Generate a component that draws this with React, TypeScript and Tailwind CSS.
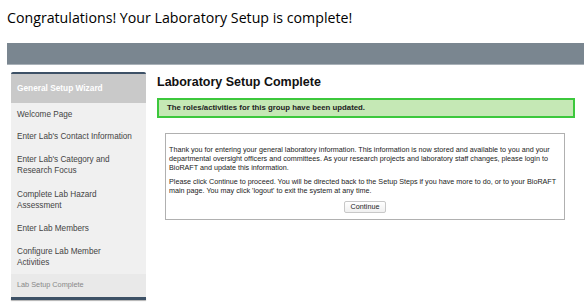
import React from "react";

const items: { label: string; lines: number }[] = [
  { label: "Welcome Page", lines: 1 },
  { label: "Enter Lab's Contact Information", lines: 1 },
  { label: "Enter Lab's Category and Research Focus", lines: 2 },
  { label: "Complete Lab Hazard Assessment", lines: 2 },
  { label: "Enter Lab Members", lines: 1 },
  { label: "Configure Lab Member Activities", lines: 2 },
];

export default function App() {
  return (
    <div className="w-[588px] h-[307px] bg-white overflow-hidden relative">
      <div
        className="pl-[7px] pt-[7px] text-[14.2px] leading-[22px] text-black"
        style={{ fontFamily: "'Open Sans', sans-serif" }}
      >
        Congratulations! Your Laboratory Setup is complete!
      </div>
      <div className="mx-[7px] mt-[14px] w-[577px] h-[22px] bg-[#7a8690] border-b border-[#a9b1b8]" />
      <div className="flex" style={{ fontFamily: "'Liberation Sans', Arial, sans-serif" }}>
        <div className="ml-[11px] mt-[7px] w-[135px] flex flex-col">
          <div className="h-[2px] bg-[#3d5166] rounded-t-[3px]" />
          <div className="h-[29px] bg-[#c9c9c9] flex items-center pl-[6px] text-white font-bold text-[8.3px]">
            General Setup Wizard
          </div>
          <div className="bg-[#f0f0f0] text-[#444] text-[8.2px] leading-[11px] pt-[-1px]">
            {items.map((it) => (
              <div
                key={it.label}
                className={`pl-[6px] pr-[2px] ${it.lines === 2 ? "py-[6.5px]" : "py-[5.5px]"}`}
              >
                {it.lines === 2 ? (
                  <div className="pr-[20px]">{it.label}</div>
                ) : (
                  it.label
                )}
              </div>
            ))}
          </div>
          <div className="bg-[#e9e9e9] text-[#888] text-[7.3px] leading-[11px] px-[6px] pt-[5px] pb-[7px]">
            Lab Setup Complete
          </div>
          <div className="h-[3px] bg-[#3d5166] shadow-[0_1px_1px_rgba(0,0,0,0.3)]" />
        </div>
        <div className="ml-[11px] flex-1 pr-[13px]">
          <div className="pt-[9px] text-[12.5px] leading-[16px] font-bold text-[#111]">
            Laboratory Setup Complete
          </div>
          <div className="mt-[8px] h-[20px] bg-[#c5e8b5] border-2 border-[#3cc83c] flex items-center pl-[8px] text-[7.8px] font-bold text-[#222]">
            The roles/activities for this group have been updated.
          </div>
          <div className="mt-[15px] ml-[8px] mr-[10px] border border-[#b0b0b0] px-[3px] pt-[11px] pb-[6px] text-[7.2px] leading-[9px] text-[#222]">
            <p>
              Thank you for entering your general laboratory information. This information is now stored and available to you and your departmental oversight officers and committees. As your research projects and laboratory staff changes, please login to BioRAFT and update this information.
            </p>
            <p className="mt-[5px]">
              Please click Continue to proceed. You will be directed back to the Setup Steps if you have more to do, or to your BioRAFT main page. You may click 'logout' to exit the system at any time.
            </p>
            <div className="flex justify-center mt-[6px]">
              <button className="px-[6px] h-[12px] text-[7.2px] leading-[10px] border border-[#c8c8c8] rounded-[2px] bg-gradient-to-b from-white to-[#f0f0f0] text-[#222]">
                Continue
              </button>
            </div>
          </div>
        </div>
      </div>
    </div>
  );
}
